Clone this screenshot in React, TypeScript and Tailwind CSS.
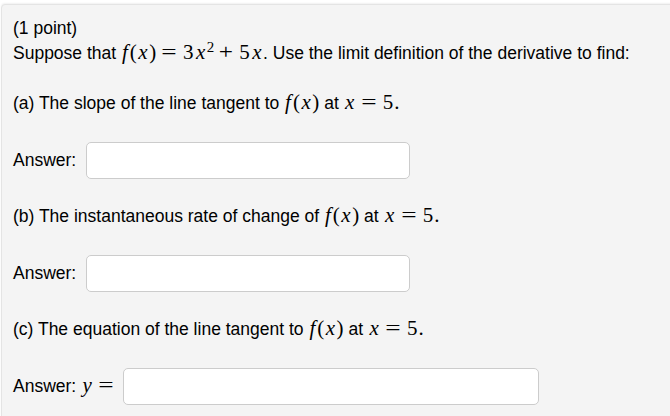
import React from 'react';

const mathFont = { fontFamily: '"Liberation Serif", "DejaVu Serif", serif' };

// italic variable, padded a bit to get closer to the wide TeX italics
const V = ({ children, pad = 'px-[1.5px]' }: { children: React.ReactNode; pad?: string }) => (
  <span className={`italic ${pad}`}>{children}</span>
);

const Math = ({ children }: { children: React.ReactNode }) => (
  <span className="text-[21px] leading-none whitespace-nowrap" style={mathFont}>
    {children}
  </span>
);

const Rel = ({ children }: { children: React.ReactNode }) => (
  <span className="mx-[7px] inline-block scale-x-[1.3]">{children}</span>
);

const Fx = () => (
  <Math>
    <V pad="pl-[1px] pr-[2px]">f</V>
    <span>(</span>
    <V>x</V>
    <span>)</span>
  </Math>
);

const AtX5 = () => (
  <Math>
    <V>x</V>
    <Rel>=</Rel>
    <span className="px-[1px]">5</span>.
  </Math>
);

const AnswerRow = ({ label, boxClass }: { label: React.ReactNode; boxClass: string }) => (
  <div className="mt-[26px] flex items-center">
    <div className="shrink-0">{label}</div>
    <div className={`h-[37px] bg-white border border-[#cccccc] rounded-[5px] ${boxClass}`}></div>
  </div>
);

export default function App() {
  return (
    <div
      className="w-[670px] h-[416px] overflow-hidden bg-white text-[17.5px] text-black"
      style={{ fontFamily: '"Liberation Sans", Arial, sans-serif' }}
    >
      <div className="mt-[4px] ml-[1px] w-[700px] h-[440px] bg-[#f4f4f4] border border-[#e4e4e4] rounded-tl-[4px] shadow-[0_-1px_2px_rgba(0,0,0,0.06)] pl-[11px] pt-[11px]">
        <div className="leading-[25px]">(1 point)</div>
        <div className="leading-[25px]">
          Suppose that <Fx />
          <Math>
            <Rel>=</Rel>
            <span className="px-[1px]">3</span>
            <V>x</V>
            <sup className="text-[15px] not-italic">2</sup>
            <span className="mx-[6px] inline-block scale-x-[1.2]">+</span>
            <span className="px-[1px]">5</span>
            <V>x</V>
          </Math>
          . Use the limit definition of the derivative to find:
        </div>
        <div className="leading-[25px] mt-[25px]">
          (a) The slope of the line tangent to <Fx /> at <AtX5 />
        </div>
        <AnswerRow label="Answer:" boxClass="ml-[10px] w-[324px]" />
        <div className="leading-[25px] mt-[25px]">
          (b) The instantaneous rate of change of <Fx /> at <AtX5 />
        </div>
        <AnswerRow label="Answer:" boxClass="ml-[10px] w-[324px]" />
        <div className="leading-[25px] mt-[25px]">
          (c) The equation of the line tangent to <Fx /> at <AtX5 />
        </div>
        <AnswerRow
          label={
            <span>
              Answer: <Math><V>y</V><Rel>=</Rel></Math>
            </span>
          }
          boxClass="ml-[4px] w-[416px]"
        />
      </div>
    </div>
  );
}
